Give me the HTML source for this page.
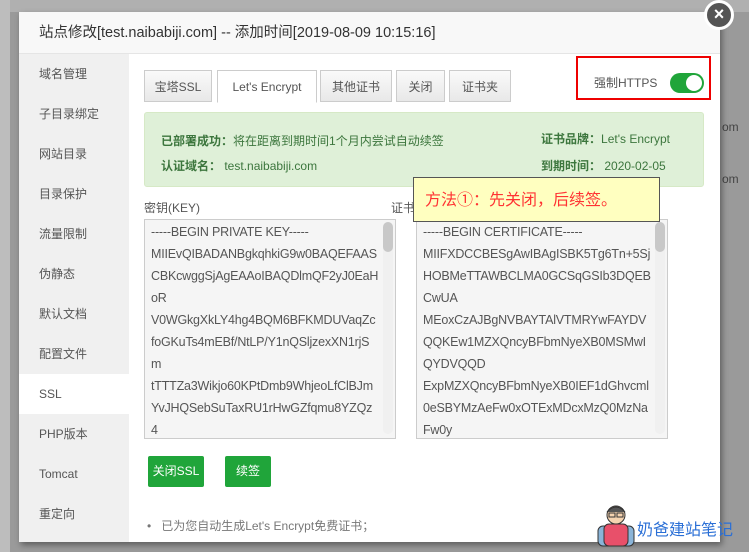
<!DOCTYPE html>
<html><head><meta charset="utf-8"><style>
*{box-sizing:border-box;margin:0;padding:0}
body{width:749px;height:552px;overflow:hidden;background:#9a9a9a;font-family:"Liberation Sans","Noto Sans CJK SC",sans-serif;position:relative}
.abs{position:absolute}
.dlg{left:19px;top:12px;width:701px;height:530px;background:#fff;box-shadow:2px 3px 6px rgba(0,0,0,.4)}
.title{left:0;top:0;width:701px;height:42px;background:#f8f8f8;border-bottom:1px solid #e5e5e5;font-size:14.5px;color:#333;line-height:42px;padding-left:20px}
.side{left:0;top:42px;width:110px;height:488px;background:#f0f0f0}
.side div{height:40px;line-height:40px;padding-left:20px;font-size:12px;color:#555}
.side div.on{background:#fff}
.tab{top:58px;height:32px;border:1px solid #ccc;background:linear-gradient(#fafafa,#e8e8e8);font-size:12px;color:#555;text-align:center;line-height:32px}
.tab.on{background:#fff;border-bottom-color:#fff;height:33px}
.ok{left:125px;top:100px;width:560px;height:75px;background:#dff0d8;border:1px solid #d6e9c6;border-radius:3px;color:#3c763d;font-size:12px}
.ta{top:207px;width:252px;height:220px;background:#f5f5f5;border:1px solid #ccc;font-size:12.5px;color:#555;line-height:22px;padding:1px 0 0 6px;overflow:hidden;white-space:nowrap;letter-spacing:-0.2px}
.sb{right:2px;top:2px;width:10px;height:212px;background:#f0f0f0;border-radius:5px}
.sb i{display:block;width:10px;height:30px;background:#c8c8c8;border-radius:5px}
.btn{top:444px;height:31px;background:#20a53a;color:#fff;font-size:12px;border-radius:2px;text-align:center;line-height:31px}
</style></head><body>
<div class="abs" style="left:0;top:0;width:749px;height:12px;background:#b0b0b0"></div>
<div class="abs" style="left:0;top:0;width:10px;height:552px;background:#bdbdbd"></div>
<div class="abs" style="left:722px;top:120px;font-size:12px;color:#444">om</div>
<div class="abs" style="left:722px;top:172px;font-size:12px;color:#444">om</div>
<div class="abs dlg">
 <div class="abs title">站点修改[test.naibabiji.com] -- 添加时间[2019-08-09 10:15:16]</div>
 <div class="abs side">
  <div>域名管理</div><div>子目录绑定</div><div>网站目录</div><div>目录保护</div><div>流量限制</div><div>伪静态</div><div>默认文档</div><div>配置文件</div><div class="on">SSL</div><div>PHP版本</div><div>Tomcat</div><div>重定向</div>
 </div>
 <div class="abs tab" style="left:125px;width:68px">宝塔SSL</div>
 <div class="abs tab on" style="left:198px;width:100px">Let's Encrypt</div>
 <div class="abs tab" style="left:301px;width:72px">其他证书</div>
 <div class="abs tab" style="left:377px;width:49px">关闭</div>
 <div class="abs tab" style="left:430px;width:62px">证书夹</div>
 <div class="abs" style="left:557px;top:44px;width:135px;height:44px;border:2px solid #e00"></div>
 <div class="abs" style="left:575px;top:62px;font-size:12px;color:#555">强制HTTPS</div>
 <div class="abs" style="left:651px;top:61px;width:34px;height:20px;border-radius:10px;background:#20a53a"><div class="abs" style="right:2px;top:2px;width:16px;height:16px;border-radius:8px;background:#fff"></div></div>
 <div class="abs ok">
  <div class="abs" style="left:16px;top:19px"><b>已部署成功：</b>将在距离到期时间1个月内尝试自动续签</div>
  <div class="abs" style="left:16px;top:44px"><b>认证域名：</b> test.naibabiji.com</div>
  <div class="abs" style="left:396px;top:17px"><b>证书品牌：</b>Let's Encrypt</div>
  <div class="abs" style="left:396px;top:44px"><b>到期时间：</b> 2020-02-05</div>
 </div>
 <div class="abs" style="left:125px;top:187px;font-size:12px;color:#555">密钥(KEY)</div>
 <div class="abs" style="left:372px;top:187px;font-size:12px;color:#555">证书</div>
 <div class="abs ta" style="left:125px">-----BEGIN PRIVATE KEY-----<br>MIIEvQIBADANBgkqhkiG9w0BAQEFAAS<br>CBKcwggSjAgEAAoIBAQDlmQF2yJ0EaH<br>oR<br>V0WGkgXkLY4hg4BQM6BFKMDUVaqZc<br>foGKuTs4mEBf/NtLP/Y1nQSljzexXN1rjS<br>m<br>tTTTZa3Wikjo60KPtDmb9WhjeoLfClBJm<br>YvJHQSebSuTaxRU1rHwGZfqmu8YZQz<br>4<div class="abs" style="right:0;top:0;width:14px;height:218px;background:#f5f5f5"></div><div class="abs sb"><i></i></div></div>
 <div class="abs ta" style="left:397px">-----BEGIN CERTIFICATE-----<br>MIIFXDCCBESgAwIBAgISBK5Tg6Tn+5Sj<br>HOBMeTTAWBCLMA0GCSqGSIb3DQEB<br>CwUA<br>MEoxCzAJBgNVBAYTAlVTMRYwFAYDV<br>QQKEw1MZXQncyBFbmNyeXB0MSMwI<br>QYDVQQD<br>ExpMZXQncyBFbmNyeXB0IEF1dGhvcml<br>0eSBYMzAeFw0xOTExMDcxMzQ0MzNa<br>Fw0y<div class="abs" style="right:0;top:0;width:14px;height:218px;background:#f5f5f5"></div><div class="abs sb"><i></i></div></div>
 <div class="abs" style="left:394px;top:165px;width:247px;height:45px;background:#ffffc0;border:1px solid #555;color:#f33;font-size:16px;line-height:45px;padding-left:11px">方法①：先关闭，后续签。</div>
 <div class="abs btn" style="left:129px;width:56px">关闭SSL</div>
 <div class="abs btn" style="left:206px;width:46px">续签</div>
 <div class="abs" style="left:128px;top:505px;font-size:12px;color:#777">•&nbsp;&nbsp;&nbsp;已为您自动生成Let's Encrypt免费证书；</div>
</div>
<div class="abs" style="left:704px;top:0;width:30px;height:30px;border-radius:15px;background:#555;border:3px solid #fff;color:#fff;font-size:18px;font-weight:bold;text-align:center;line-height:22px">×</div>
<svg class="abs" style="left:596px;top:500px" width="40" height="48" viewBox="0 0 40 48">
 <rect x="2" y="26" width="36" height="20" rx="5" fill="#8ab4d8" stroke="#333"/>
 <rect x="8" y="24" width="24" height="22" rx="5" fill="#e8506a" stroke="#333"/>
 <circle cx="20" cy="15" r="9" fill="#f5d3b0" stroke="#333"/>
 <path d="M11 12 Q20 2 29 12" fill="#555" stroke="#333"/>
 <rect x="13" y="13" width="6" height="4" fill="none" stroke="#333"/><rect x="21" y="13" width="6" height="4" fill="none" stroke="#333"/>
</svg>
<div class="abs" style="left:637px;top:516px;font-size:16px;color:#2a6fd6">奶爸建站笔记</div>
</body></html>
